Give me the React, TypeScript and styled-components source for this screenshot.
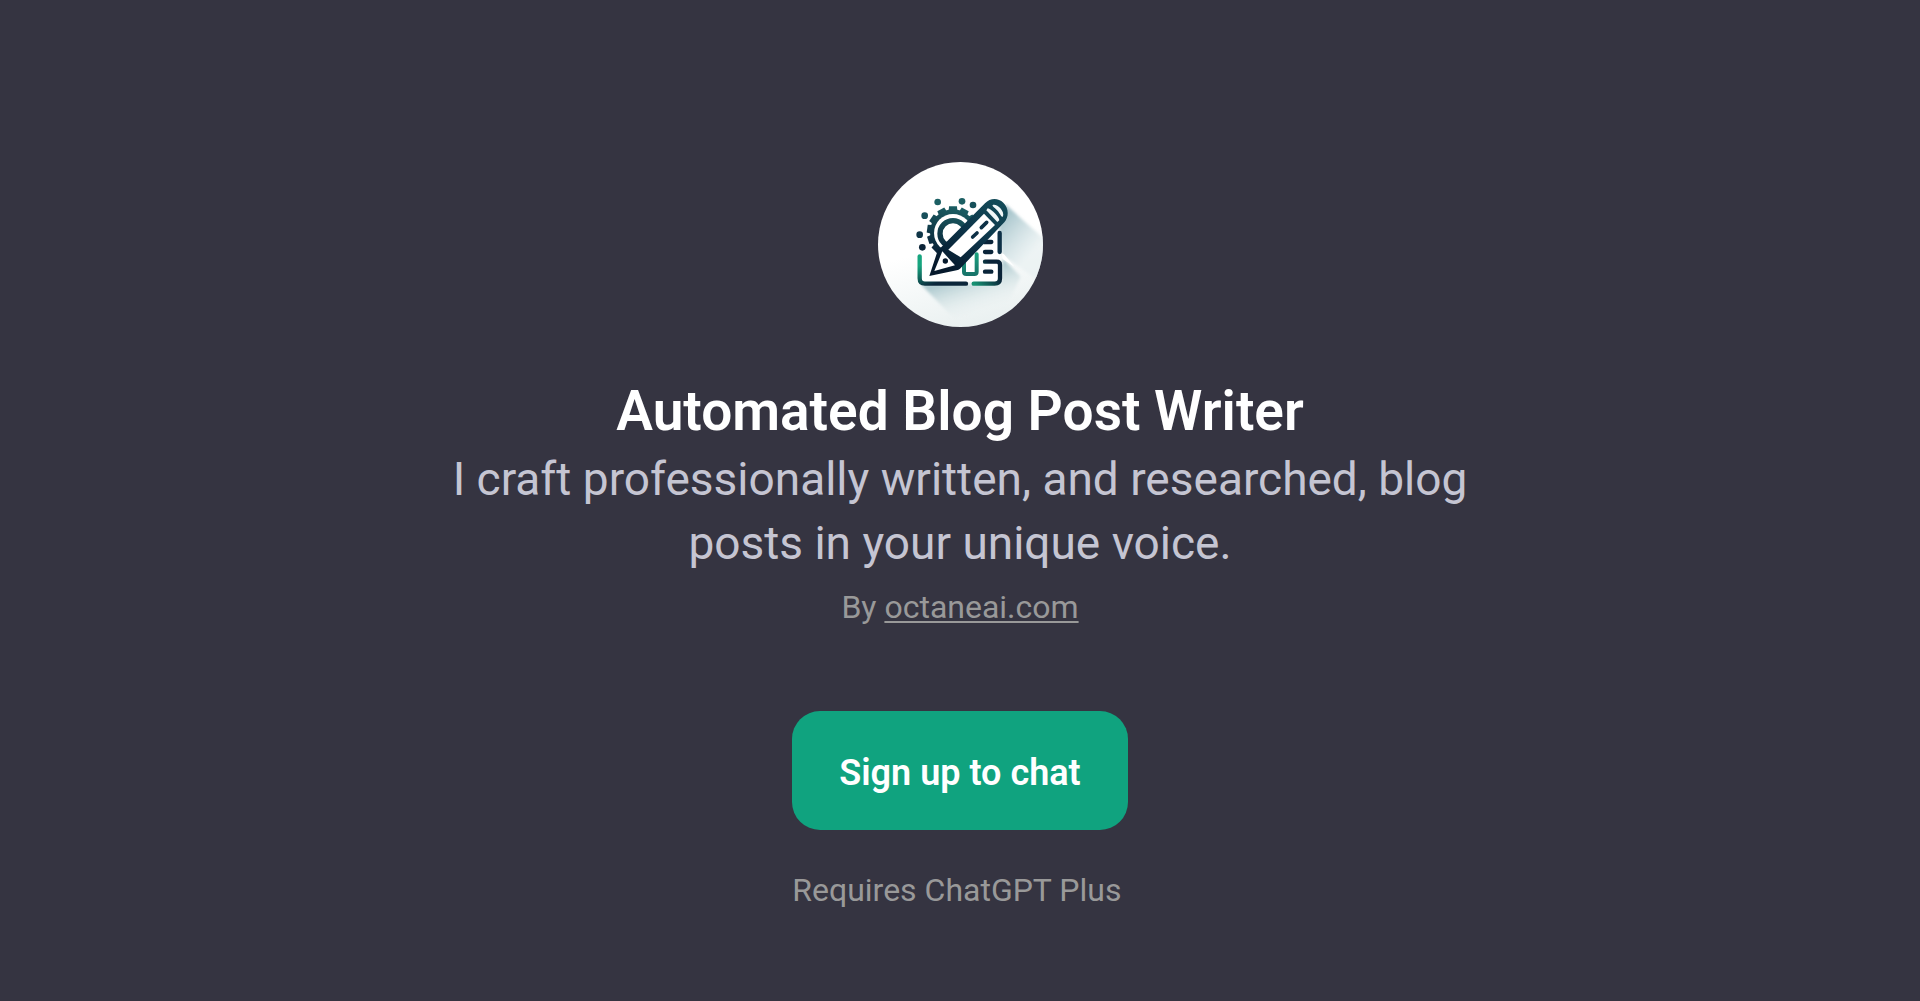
import React from "react";
import styled, { createGlobalStyle } from "styled-components";

const GlobalStyle = createGlobalStyle`
  *, *::before, *::after { box-sizing: border-box; }
  body {
    margin: 0;
    background: #353441;
    font-family: Roboto, "Liberation Sans", sans-serif;
  }
`;

const Page = styled.main`
  display: flex;
  flex-direction: column;
  align-items: center;
  min-height: 100vh;
  padding: 162px 24px 48px;
  text-align: center;
`;

const Avatar = styled.div`
  width: 165px;
  height: 165px;
  margin-bottom: 48px;
  border-radius: 50%;
  overflow: hidden;
`;

const Logo = styled.svg`
  display: block;
  width: 100%;
  height: 100%;
`;

const Title = styled.h1`
  margin: 0;
  color: #ffffff;
  font-size: 55px;
  font-weight: 600;
  line-height: 72px;
`;

const Description = styled.p`
  max-width: 1080px;
  margin: 0 0 8px;
  color: #c5c5d2;
  font-size: 46px;
  line-height: 64px;
`;

const Caption = styled.p`
  margin: 0;
  color: #999999;
  font-size: 32px;
  line-height: 48px;
`;

const AuthorLink = styled.a`
  color: inherit;
  text-decoration: underline;
  text-decoration-thickness: 2px;
  text-underline-offset: 3px;
`;

const Actions = styled.div`
  display: flex;
  flex-direction: column;
  align-items: flex-start;
  gap: 36px;
  margin-top: 80px;
`;

const SignUpButton = styled.button`
  padding: 38px 47px 33px;
  border: 0;
  border-radius: 28px;
  background: #10a37f;
  color: #ffffff;
  font-family: inherit;
  font-size: 36px;
  font-weight: 600;
  line-height: 48px;
  cursor: pointer;
`;

const gearTeeth = [-172, -146, -118, -90, -62, -34, 162, 136];
const dots = [
  [201, 141, 10, "#1c5f63"],
  [274, 139, 10, "#1c5f63"],
  [307, 150, 10, "#17505a"],
  [162, 182, 10, "#174f5a"],
  [147, 239, 10, "#0f3547"],
  [155, 277, 10, "#0b2438"],
] as const;

function WriterLogo() {
  return (
    <Logo viewBox="22 21 495 495" aria-hidden="true">
      <defs>
        <linearGradient id="paper" x1="0.35" y1="0" x2="0.6" y2="1">
          <stop offset="0.5" stopColor="#ffffff" />
          <stop offset="1" stopColor="#e9f0f0" />
        </linearGradient>
        <linearGradient id="capShadow" gradientUnits="userSpaceOnUse" x1="390" y1="200" x2="490" y2="290">
          <stop offset="0" stopColor="#a9c6cd" />
          <stop offset="1" stopColor="#e6eff0" stopOpacity="0.6" />
        </linearGradient>
        <linearGradient id="baseShadow" gradientUnits="userSpaceOnUse" x1="270" y1="370" x2="310" y2="490">
          <stop offset="0" stopColor="#b0cbd0" />
          <stop offset="1" stopColor="#eef4f4" stopOpacity="0" />
        </linearGradient>
        <linearGradient id="pencil" gradientUnits="userSpaceOnUse" x1="370" y1="135" x2="220" y2="340">
          <stop offset="0" stopColor="#134a58" />
          <stop offset="0.5" stopColor="#0c3348" />
          <stop offset="1" stopColor="#06192c" />
        </linearGradient>
        <linearGradient id="gear" gradientUnits="userSpaceOnUse" x1="240" y1="150" x2="200" y2="290">
          <stop offset="0" stopColor="#1b5e63" />
          <stop offset="1" stopColor="#0a2439" />
        </linearGradient>
        <linearGradient id="leftEdge" gradientUnits="userSpaceOnUse" x1="147" y1="300" x2="185" y2="390">
          <stop offset="0.3" stopColor="#17a57f" />
          <stop offset="1" stopColor="#0b263a" />
        </linearGradient>
        <linearGradient id="rightEdge" gradientUnits="userSpaceOnUse" x1="315" y1="392" x2="375" y2="350">
          <stop offset="0" stopColor="#179172" />
          <stop offset="1" stopColor="#0a2338" />
        </linearGradient>
        <linearGradient id="pocket" gradientUnits="userSpaceOnUse" x1="300" y1="295" x2="300" y2="362">
          <stop offset="0" stopColor="#1ca27f" />
          <stop offset="1" stopColor="#167168" />
        </linearGradient>
        <filter id="soft" x="-10%" y="-10%" width="120%" height="120%">
          <feGaussianBlur stdDeviation="5" />
        </filter>
      </defs>

      <rect x="22" y="21" width="495" height="495" fill="url(#paper)" />
      <path d="M404 148 L535 265 V400 L395 300 L385 220 Z" fill="url(#capShadow)" filter="url(#soft)" />
      <path d="M150 388 L390 388 L396 310 L450 365 L400 470 L250 490 Z" fill="url(#baseShadow)" filter="url(#soft)" />
      <path d="M392 294 L400 298 L432 336 L396 312 Z" fill="#ffffff" />
      <path d="M152 300 H310 L388 228 V380 H152 Z" fill="#ffffff" />

      {dots.map(([cx, cy, r, fill]) => (
        <circle key={`${cx}-${cy}`} cx={cx} cy={cy} r={r} fill={fill} />
      ))}

      <g fill="url(#gear)">
        {gearTeeth.map((angle) => {
          const a = (angle * Math.PI) / 180;
          const half = 0.15;
          const point = (r: number, t: number) => `${247 + r * Math.cos(t)} ${232 + r * Math.sin(t)}`;
          return (
            <path
              key={angle}
              d={`M${point(62, a - half - 0.07)} L${point(79, a - half)} L${point(79, a + half)} L${point(62, a + half + 0.07)} Z`}
            />
          );
        })}
        <circle cx="247" cy="232" r="69" />
      </g>
      <circle cx="247" cy="234" r="57" fill="#ffffff" />
      <circle cx="247" cy="236" r="39" fill="#ffffff" stroke="url(#gear)" strokeWidth="16" />
      <path d="M222 295 L330 190 L350 240 L280 330 L215 350 Z" fill="#ffffff" />

      <g fill="none" strokeLinecap="round" strokeLinejoin="round" strokeWidth="13">
        <path d="M147 304 V370 Q147 386 163 386 H286" stroke="url(#leftEdge)" />
        <path d="M343 320 H378 Q388 320 388 330 V370 Q388 386 372 386 H309" stroke="url(#rightEdge)" />
        <path d="M387 234 V291" stroke="#0d3046" />
        <path d="M340 261 H362 M343 291 H362 M343 350 H362" stroke="#0a2439" />
        <path d="M280 318 V350 Q280 357 287 357 H311 Q318 357 318 350 V298" stroke="url(#pocket)" strokeWidth="12" />
      </g>

      <path
        d="M176 363 L201 287 L343 145 C358 129 382 128 398 143 C414 158 416 184 401 202 L268 341 Q264 345 258 346 Z"
        fill="url(#pencil)"
      />
      <path d="M233 284 L340 176 L373 210 L270 307 Z" fill="#ffffff" />
      <path d="M191 348 L215 289 L253 331 Z" fill="#ffffff" />
      <circle cx="224" cy="318" r="8" fill="#06192c" />
      <path d="M351 160 C359 159 386 186 386 196 L380 201 L347 166 Z" fill="#f1f7f8" />
      <path d="M366 150 C376 144 403 166 397 184 C394 190 389 178 382 169 C375 160 363 153 366 150 Z" fill="#f1f7f8" />
      <path
        d="M306 246 L319 234 M332 218 L348 202"
        fill="none"
        stroke="#0d3046"
        strokeWidth="11"
        strokeLinecap="round"
      />
    </Logo>
  );
}

export default function App() {
  return (
    <>
      <GlobalStyle />
      <Page>
        <Avatar>
          <WriterLogo />
        </Avatar>
        <Title>Automated Blog Post Writer</Title>
        <Description>
          I craft professionally written, and researched, blog posts in your unique voice.
        </Description>
        <Caption>
          By <AuthorLink href="#">octaneai.com</AuthorLink>
        </Caption>
        <Actions>
          <SignUpButton type="button">Sign up to chat</SignUpButton>
          <Caption>Requires ChatGPT Plus</Caption>
        </Actions>
      </Page>
    </>
  );
}
